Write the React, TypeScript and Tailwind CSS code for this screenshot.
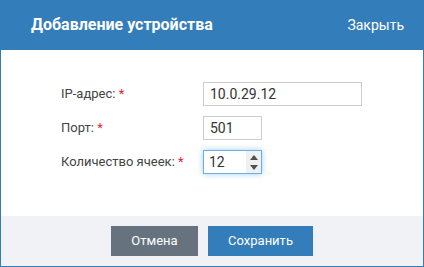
import React from 'react';

const Field: React.FC<{ label: string; children: React.ReactNode }> = ({ label, children }) => (
  <div className="flex items-center h-[24px]">
    <label className="w-[142px] text-[13px] text-[#444]">
      {label} <span className="text-[#e0263c]">*</span>
    </label>
    {children}
  </div>
);

const App: React.FC = () => {
  return (
    <div className="w-[424px] h-[267px] flex flex-col bg-white border-x border-b border-[#347dbb]" style={{ fontFamily: 'Roboto, "Liberation Sans", sans-serif' }}>
      <div className="h-[50px] -mx-px bg-[#347dbb] flex items-center justify-between pl-[31px] pr-[20px] text-white">
        <h1 className="text-[16px] font-bold">Добавление устройства</h1>
        <span className="text-[14px]">Закрыть</span>
      </div>

      <div className="flex-1 flex flex-col gap-[10px] pl-[60px] pt-[32px]">
        <Field label="IP-адрес:">
          <input
            readOnly
            value="10.0.29.12"
            className="w-[159px] h-[24px] border border-[#ccc] px-[6px] text-[14px] text-[#333] outline-none"
          />
        </Field>
        <Field label="Порт:">
          <input
            readOnly
            value="501"
            className="w-[59px] h-[24px] border border-[#ccc] px-[6px] text-[14px] text-[#333] outline-none"
          />
        </Field>
        <Field label="Количество ячеек:">
          <div className="w-[59px] h-[24px] border border-[#66afe9] shadow-[0_0_6px_rgba(102,175,233,0.6)] flex">
            <span className="flex-1 px-[5px] text-[14px] text-[#333] leading-[22px]">12</span>
            <div className="w-[15px] bg-[#f0f0f0] flex flex-col items-center justify-center gap-[5px]">
              <svg width="8" height="5" viewBox="0 0 8 5"><path d="M4 0L8 5H0z" fill="#505050" /></svg>
              <svg width="8" height="5" viewBox="0 0 8 5"><path d="M0 0H8L4 5z" fill="#505050" /></svg>
            </div>
          </div>
        </Field>
      </div>

      <div className="h-[50px] bg-[#f1f2f6] flex items-center justify-center gap-[10px]">
        <button className="w-[87px] h-[30px] bg-[#66737e] text-white text-[13px]">Отмена</button>
        <button className="w-[105px] h-[30px] bg-[#347dbb] text-white text-[13px]">Сохранить</button>
      </div>
    </div>
  );
};

export default App;
